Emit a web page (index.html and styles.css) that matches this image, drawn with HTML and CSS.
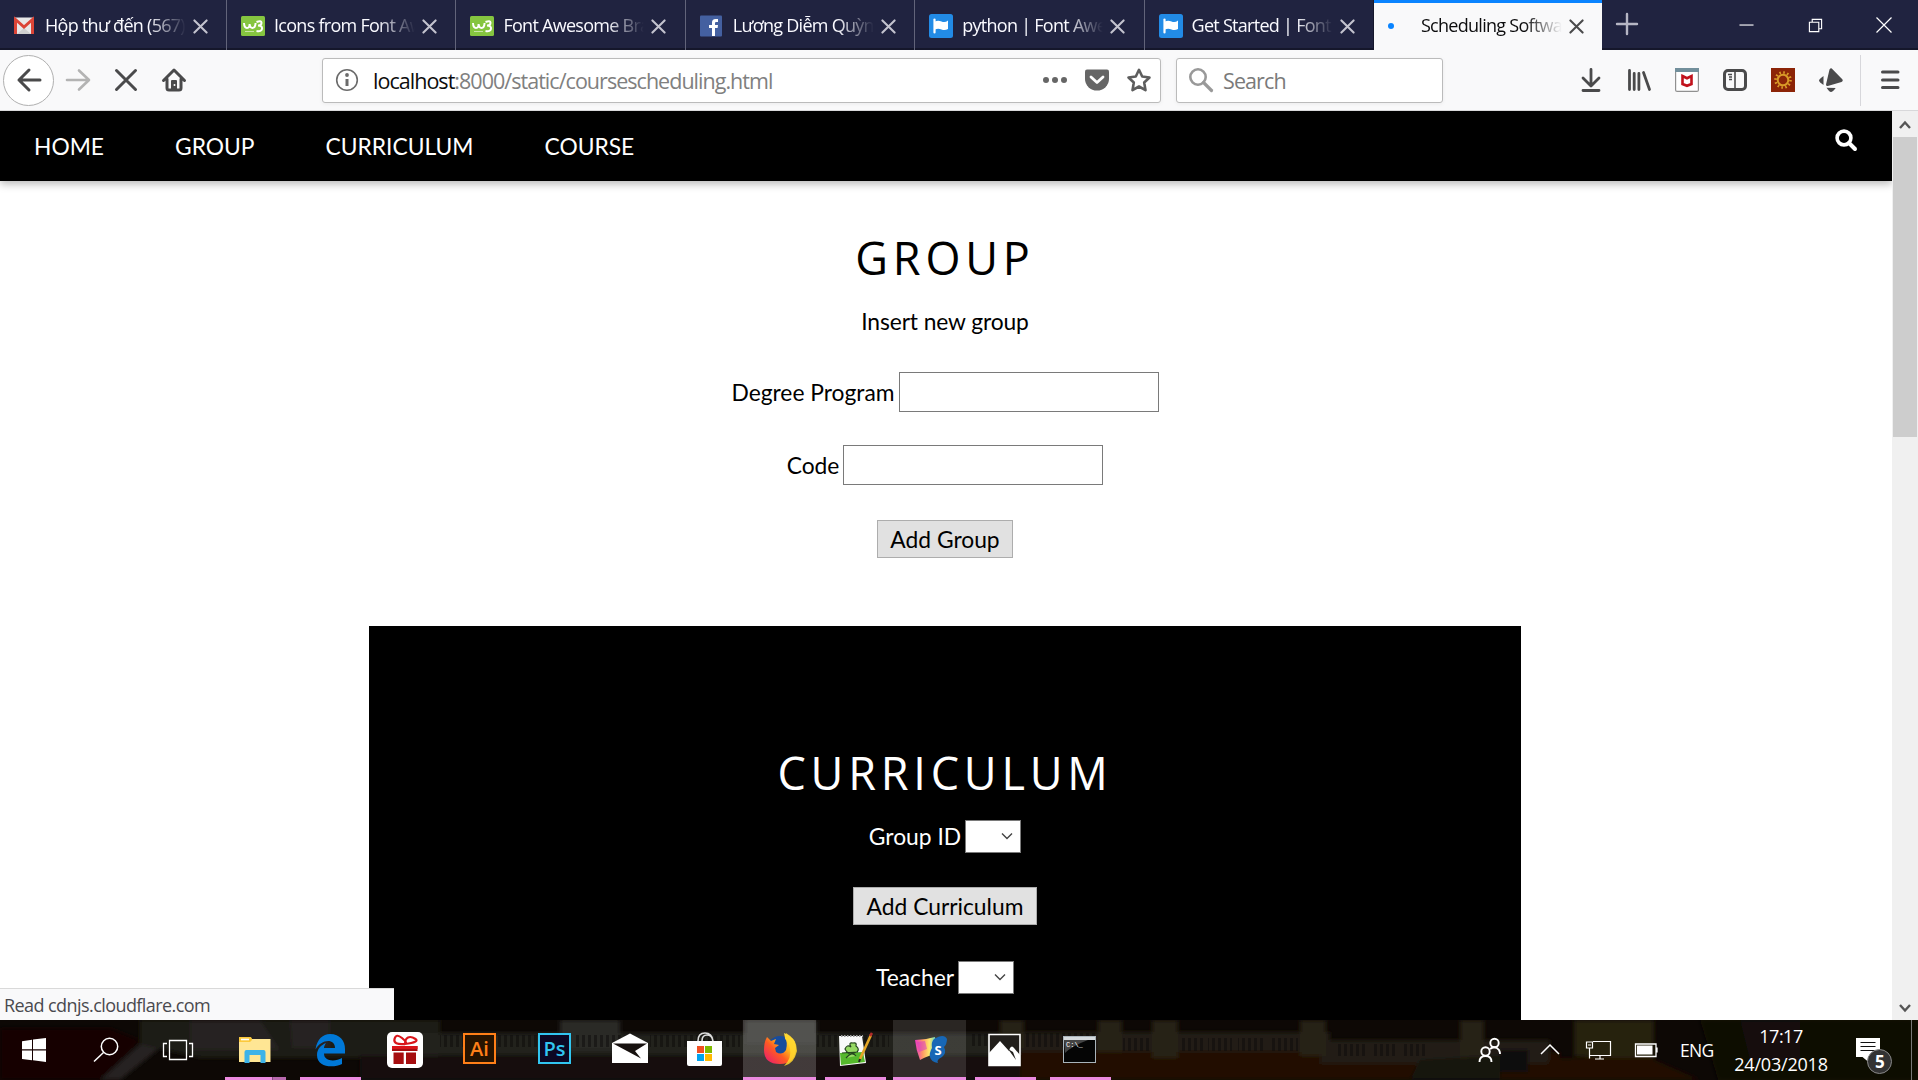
FILE: index.html
```html
<!DOCTYPE html>
<html lang="en">
<head>
<meta charset="utf-8">
<title>Scheduling Software</title>
<link rel="stylesheet" href="styles.css">
</head>
<body>
<svg class="defs" aria-hidden="true">
  <symbol id="close" viewBox="0 0 16 16"><path d="M1.5 1.5l13 13M14.5 1.5l-13 13" fill="none" stroke="currentColor" stroke-width="2.2" stroke-linecap="round"/></symbol>
  <symbol id="w3" viewBox="0 0 24 24"><rect y="2" width="24" height="20" rx="1.5" fill="#85c540"/><path d="M3 9q.3 5 3 5t2.600-4q.4 4 3 4t3-5M15.500 8q5-2 5 .8t-3.500 2.700q4.500.2 4 3.300t-5.500 2.200" fill="none" stroke="#fff" stroke-width="2"/><path d="M4 17.500h9" stroke="#c7e5a5" stroke-width="1"/></symbol>
  <symbol id="flag" viewBox="0 0 24 24"><rect width="24" height="24" rx="2.500" fill="#228be6"/><path d="M5.500 5.500v13" stroke="#fff" stroke-width="2.200" stroke-linecap="round"/><path d="M6 7.500q3-1.500 6.500 0t6.500-1v8.500q-3 1.800-6.500.5T6 15.500z" fill="#fff"/></symbol>
  <symbol id="down" viewBox="0 0 12 8"><path d="M1 1.500l5 5 5-5" fill="none" stroke="#444" stroke-width="1.400"/></symbol>
</svg>

<header class="tabs">
  <div class="tab first"><svg class="fav" viewBox="0 0 24 24"><rect x="2" y="3.500" width="20" height="16.500" rx="1" fill="#e8e8e8"/><path d="M5 20l7-6 7 6z" fill="#cfcfcf"/><path d="M3.500 20V5.500l8.500 7.500 8.500-7.500V20" fill="none" stroke="#dc4537" stroke-width="3"/></svg><span class="label">Hộp thư đến (567)</span><svg class="x"><use href="#close"/></svg></div>
  <div class="tab"><svg class="fav"><use href="#w3"/></svg><span class="label">Icons from Font Awesome</span><svg class="x"><use href="#close"/></svg></div>
  <div class="tab"><svg class="fav"><use href="#w3"/></svg><span class="label">Font Awesome Brand</span><svg class="x"><use href="#close"/></svg></div>
  <div class="tab"><svg class="fav" viewBox="0 0 24 24"><rect y="1.500" width="22" height="21" rx="1" fill="#4460a0"/><path d="M12 22v-8H9v-3h3V8.500Q12 5 15.500 5H18v3h-2q-1 0-1 1.200V11h3l-.4 3H15v8z" fill="#fff"/></svg><span class="label">Lương Diễm Quỳnh</span><svg class="x"><use href="#close"/></svg></div>
  <div class="tab"><svg class="fav"><use href="#flag"/></svg><span class="label">python | Font Awesome</span><svg class="x"><use href="#close"/></svg></div>
  <div class="tab"><svg class="fav"><use href="#flag"/></svg><span class="label">Get Started | Font Awesome</span><svg class="x"><use href="#close"/></svg></div>
  <div class="tab active"><svg class="fav" viewBox="0 0 24 24"><circle cx="3" cy="12" r="3" fill="#0a84ff"/></svg><span class="label">Scheduling Software</span><svg class="x"><use href="#close"/></svg></div>
  <svg class="plus" viewBox="0 0 22 22"><path d="M11 1v20M1 11h20" stroke="#b6b6c4" stroke-width="2.400" stroke-linecap="round"/></svg>
  <div class="controls">
    <svg viewBox="0 0 16 16"><path d="M.5 7.500h15" stroke="#fff" stroke-width="1.200"/></svg>
    <svg viewBox="0 0 16 16"><path d="M1.500 4.500h10v10h-10zM4.500 4.500v-3h10v10h-3" fill="none" stroke="#fff" stroke-width="1.200"/></svg>
    <svg viewBox="0 0 16 16"><path d="M.5.500l15 15M15.500.500l-15 15" stroke="#fff" stroke-width="1.200"/></svg>
  </div>
</header>

<div class="toolbar">
  <button class="back"><svg viewBox="0 0 24 24"><path d="M23 12H2M12 2L2 12l10 10" fill="none" stroke="#4a4a4b" stroke-width="3" stroke-linecap="round" stroke-linejoin="round"/></svg></button>
  <div class="nav-icons">
    <svg viewBox="0 0 24 24"><path d="M1 12h21M13 2.500l10 9.500-10 9.500" fill="none" stroke="#b3b3b3" stroke-width="2.600" stroke-linecap="round" stroke-linejoin="round"/></svg>
    <svg viewBox="0 0 24 24"><path d="M2.500 2.500l19 19M21.500 2.500l-19 19" stroke="#4a4a4b" stroke-width="3" stroke-linecap="round"/></svg>
    <svg viewBox="0 0 24 24"><path d="M1.500 12.500L12 2l10.500 10.500M5 11v9q0 2 2 2h10q2 0 2-2v-9" fill="none" stroke="#4a4a4b" stroke-width="3" stroke-linecap="round" stroke-linejoin="round"/><path d="M9 22v-9q0-1 1-1h4q1 0 1 1v9z" fill="#4a4a4b"/><circle cx="12.500" cy="17" r="1" fill="#fff"/></svg>
  </div>
  <div class="url">
    <svg viewBox="0 0 24 24"><circle cx="12" cy="12" r="10.300" fill="none" stroke="#6b6b6b" stroke-width="1.600"/><path d="M12 11v7" stroke="#6b6b6b" stroke-width="3"/><circle cx="12" cy="7" r="1.900" fill="#6b6b6b"/></svg>
    <span class="address"><b>localhost</b>:8000/static/coursescheduling.html</span>
    <svg viewBox="0 0 24 24" fill="#666"><circle cx="3" cy="12" r="3"/><circle cx="12" cy="12" r="3"/><circle cx="21" cy="12" r="3"/></svg>
    <svg viewBox="0 0 24 24"><path d="M0 3.500Q0 1.500 2 1.500h20q2 0 2 2V11a12 11.500 0 0 1-24 0z" fill="#666"/><path d="M6 9l6 5.500L18 9" fill="none" stroke="#fff" stroke-width="2.800" stroke-linecap="round" stroke-linejoin="round"/></svg>
    <svg viewBox="0 0 24 24"><path d="M12 1.800l3.200 6.700 7.300 1-5.300 5 1.300 7.700L12 18.500l-6.500 3.700 1.300-7.700-5.300-5 7.300-1z" fill="none" stroke="#5e5e5e" stroke-width="2.600" stroke-linejoin="round"/></svg>
  </div>
  <div class="searchbox">
    <svg viewBox="0 0 24 24"><circle cx="9" cy="9" r="7.700" fill="none" stroke="#999" stroke-width="2.600"/><path d="M14.500 14.500l8 8" stroke="#999" stroke-width="3.200" stroke-linecap="round"/></svg>
    <span>Search</span>
  </div>
  <div class="tools">
    <svg viewBox="0 0 24 24"><path d="M12 1.500V17M4 10l8 8 8-8M4 22.500h16" fill="none" stroke="#4a4a4b" stroke-width="2.800" stroke-linecap="round" stroke-linejoin="round"/></svg>
    <svg viewBox="0 0 24 24"><path d="M2.500 2.500v19M7.200 5.500v16M11.900 5.500v16M16.500 4.500l6 17" fill="none" stroke="#4a4a4b" stroke-width="2.800" stroke-linecap="round"/></svg>
    <svg viewBox="0 0 24 24"><rect x=".6" y=".6" width="22.800" height="22.800" rx="1.500" fill="#fff" stroke="#909090" stroke-width="1.200"/><path d="M0 0h24v4H0z" fill="#728f9b"/><path d="M7.500 8l4.500 2.200L16.500 8v8L12 17.800 7.500 16z" fill="none" stroke="#c1121c" stroke-width="2.600"/></svg>
    <svg viewBox="0 0 24 24"><rect x="1.500" y="2.500" width="21" height="19" rx="3.500" fill="none" stroke="#4a4a4b" stroke-width="3"/><path d="M12 3v18" stroke="#4a4a4b" stroke-width="1.600"/><path d="M5 6.500h4M6 9h3M6 11.500h3" stroke="#4a4a4b" stroke-width="1.300"/></svg>
    <svg viewBox="0 0 24 24"><rect width="24" height="24" fill="#8c2407"/><circle cx="12" cy="12" r="5.300" fill="none" stroke="#d99a28" stroke-width="2"/><circle cx="12" cy="12" r="7.500" fill="none" stroke="#d99a28" stroke-width="2.600" stroke-dasharray="1.600 2.327"/></svg>
    <svg viewBox="0 0 24 24" fill="#4a4a4b"><path d="M7 16.500l3.500-15Q12-.8 13.500 1.200l10 10.300q1 1.800-1 2.500l-13.700 4Q7 18.300 7 16.500z"/><path d="M4.500 8v9Q0 14 0 12.500T4.500 8zM7.500 19.800l9.200.2q-3 4-4.700 4t-4.500-4.200z"/></svg>
  </div>
  <div class="menu"><svg viewBox="0 0 24 24"><path d="M4.500 4h15.500M4.500 12h15.500M4.500 19.500h15.500" stroke="#4a4a4b" stroke-width="3" stroke-linecap="round"/></svg></div>
</div>

<div class="viewport">
  <main class="page">
    <nav class="sitenav">
      <a>HOME</a><a>GROUP</a><a>CURRICULUM</a><a>COURSE</a>
      <svg viewBox="0 0 22 22"><circle cx="9" cy="9" r="6.900" fill="none" stroke="#fff" stroke-width="3.600"/><path d="M14 14l6 6" stroke="#fff" stroke-width="4" stroke-linecap="round"/></svg>
    </nav>
    <section class="group">
      <h2>GROUP</h2>
      <p>Insert new group</p>
      <div class="row r1"><label>Degree Program</label><input type="text"></div>
      <div class="row r2"><label>Code</label><input type="text"></div>
      <button class="btn b1">Add Group</button>
    </section>
    <section class="curriculum">
      <h2>CURRICULUM</h2>
      <div class="row"><label>Group ID</label><span class="select"><svg><use href="#down"/></svg></span></div>
      <button class="btn b2">Add Curriculum</button>
      <div class="row"><label>Teacher</label><span class="select"><svg><use href="#down"/></svg></span></div>
    </section>
  </main>
  <div class="scrollbar">
    <svg viewBox="0 0 12 12"><path d="M1 9l5-5.500L11 9" fill="none" stroke="#555" stroke-width="2.400"/></svg>
    <div class="thumb"></div>
    <svg class="end" viewBox="0 0 12 12"><path d="M1 3l5 5.500L11 3" fill="none" stroke="#555" stroke-width="2.400"/></svg>
  </div>
  <div class="status">Read cdnjs.cloudflare.com</div>
</div>

<footer class="taskbar">
  <svg class="wall" viewBox="0 0 1918 60" preserveAspectRatio="none">
    <defs><filter id="soft"><feGaussianBlur stdDeviation="2"/></filter>
    <pattern id="rail" width="6" height="20" patternUnits="userSpaceOnUse"><path d="M0 0h3v20H0z" fill="#0c0a09"/></pattern></defs>
    <rect width="1918" height="60" fill="#0d0805"/>
    <g filter="url(#soft)">
      <path d="M0 8h110l30 12-40 40H0z" fill="#120604"/>
      <path d="M150 15l20 5-50 40h-20z" fill="#252321"/>
      <path d="M140 0h300v38H200l-60-14z" fill="#1c1b19"/>
      <path d="M190 0h70l20 30h-90zM290 0h40v28h-38z" fill="#252421"/>
      <path d="M360 36h700v24H360z" fill="#150a08"/>
      <path d="M415 13h610v22H415z" fill="#24221f"/>
      <path d="M560 0h60v30h-60zM745 0h72v24h-72z" fill="#2c2a27"/>
      <path d="M1020 32h540v28h-540z" fill="#200b04"/>
      <path d="M1020 12h310v20h-310zM1320 20h230v24h-230z" fill="#211e16"/>
      <path d="M1000 0h24v28h-24zM1098 0h24v32h-24zM1152 0h26v38h-26zM1300 0h26v36h-26zM1460 0h24v46h-24z" fill="#262213"/>
      <path d="M1574 0h80v50h-28v-10l-52-4z" fill="#26230f"/>
      <path d="M1420 40l80-4v24h-90z" fill="#17120c"/>
      <path d="M1500 30h28v22h-28z" fill="#07070a"/>
      <path d="M1550 38h100l50 22h-160z" fill="#241006"/>
      <path d="M1700 0h218v60h-200z" fill="#0b0806"/>
      <path d="M1740 0h60v40h-50z" fill="#13100a"/>
    </g>
    <g fill="url(#rail)" opacity=".5"><path d="M440 15h112v12H440zM576 15h54v12h-54zM650 15h90v12h-90zM817 15h72v12h-72zM970 14h28v12h-28zM1025 13h70v14h-70zM1123 18h28v13h-28zM1182 18h22v13h-22zM1208 18h24v13h-24zM1238 18h26v13h-26zM1270 18h28v13h-28zM1337 24h30v12h-30zM1374 24h24v12h-24zM1404 24h22v12h-22z"/></g>
  </svg>

  <div class="slot sys start"><svg viewBox="-20 -20 40 40" fill="#fff"><path d="M-12-8.800L-2-10.300V-.7h-10zM-1-10.500L12-12V-.7H-1zM-12 .5h10v9.700l-10-1.300zM-1 .5h13V12l-13-1.700z"/></svg></div>
  <div class="slot sys"><svg viewBox="-20 -20 40 40" fill="none" stroke="#fff" stroke-width="1.500"><circle cx="3.500" cy="-3.500" r="8.200"/><path d="M-2.500 2.500l-9.500 9"/></svg></div>
  <div class="slot sys last"><svg viewBox="-20 -20 40 40" fill="none" stroke="#fff" stroke-width="1.300"><path d="M-8.500-9.500h17v19h-17zM-11-6.500h-3.500v13h3.500M11-6.500h3.500v13H11"/></svg></div>

  <div class="slot open stack"><svg viewBox="-20 -20 40 40"><path d="M-16-12q0-1 1-1h10q1 0 1.500 2H15.500V12H-16z" fill="#ffe694"/><path d="M-16-12q0-1 1-1h10q2 0 2 3l-2 2h-11z" fill="#fcc93b"/><path d="M-14-10.500h8" stroke="#fff" stroke-width="1.600"/><path d="M-10.500 13V2q0-2 2-2h17q2 0 2 2v11h-5V5h-11v8z" fill="#3db3e8"/></svg></div>
  <div class="slot open"><svg viewBox="-20 -20 40 40"><path d="M-14.500-.5C-13-11-7-16 0-16c10 0 15 7 15 15v4.500H-6c0 8 11 8.500 18 4.500v6c-8 4-25 4-25-9C-13-1-9-5-4-7c-1.500 2-2 4-2 5H5c0-10-14-9-19.500 1.500z" fill="#0078d7"/></svg></div>
  <div class="slot"><svg viewBox="-20 -20 40 40"><rect x="-18" y="-18" width="36" height="36" rx="5" fill="#fff"/><path d="M-13-4h25.500v5H-13zM-11.500 2.500h10.200V14h-10.200zM1 2.500h10V14H1z" fill="#a50e10"/><path d="M-13-4h25.500v3H-13z" fill="#d81418"/><path d="M0-6q-12 1-10.500-5T-3-12t3 6q0-5 3-6.500T10.500-11 0-6z" fill="none" stroke="#d9161a" stroke-width="2.200"/></svg></div>
  <div class="slot"><svg viewBox="-20 -20 40 40"><rect x="-16" y="-16" width="31" height="29" fill="#261300" stroke="#ff7f18" stroke-width="2"/><text x="-.5" y="6" class="ai">Ai</text></svg></div>
  <div class="slot"><svg viewBox="-20 -20 40 40"><rect x="-16" y="-16" width="31" height="29" fill="#0c0824" stroke="#31c5f0" stroke-width="2"/><text x="-.5" y="6" class="ps">Ps</text></svg></div>
  <div class="slot"><svg viewBox="-20 -20 40 40"><path d="M-18-7L0-16.500 18-7v20h-36z" fill="#fff"/><path d="M-17-6.500h34L5 1l6 7.500z" fill="#17110f"/></svg></div>
  <div class="slot"><svg viewBox="-20 -20 40 40"><path d="M-7-9q0-8 7-8t8 8M-3-9q0-6 5-6t6 6" fill="none" stroke="#ddd" stroke-width="1.600"/><path d="M-18-9h35v23q0 2-2 2h-31q-2 0-2-2z" fill="#fff"/><path d="M-8-4h7v7h-7z" fill="#f25022"/><path d="M0-4h7v7H0z" fill="#7fba00"/><path d="M-8 4h7v7h-7z" fill="#00a4ef"/><path d="M0 4h7v7H0z" fill="#ffb900"/></svg></div>
  <div class="slot open lit"><svg viewBox="-20 -20 40 40"><defs><linearGradient id="ff" x1="1" y1="0" x2="0" y2="1"><stop offset=".1" stop-color="#fff04a"/><stop offset=".4" stop-color="#ffb21c"/><stop offset=".6" stop-color="#ff5a23"/><stop offset="1" stop-color="#e5127a"/></linearGradient></defs><circle cy="-1" r="13" fill="#174c9d"/><path d="M-13-13l4 4 5-2-2 5 5 1-4 3 1 4q6 4 10-2 2-8-1-12l-1-5q11 4 12 14 0 17-16 17T-16 0q0-8 3-13z" fill="url(#ff)"/><path d="M6-17q11 6 11 18-3 13-13 15Q12 8 10-1T5-11z" fill="#ffd62e" opacity=".85"/></svg></div>
  <div class="slot open"><svg viewBox="-20 -20 40 40"><path d="M-16-14H7l4 27-26 3z" fill="#fafafa"/><path d="M-15 3L8 2l2 10-24 3z" fill="#55b82c"/><path d="M-14-14H8" stroke="#999" stroke-width="2" stroke-dasharray="1.500 1.500"/><path d="M-10-1q2-5 6-2-3-5 2-4 4-1 3 3 4 3 1 6-7 3-9 1t-3-4zM-13 3l16-1M-9 8q6-7 10-2" fill="#96d963" stroke="#24451d" stroke-width="1.200"/><path d="M16-15L5 9" stroke="#e4a526" stroke-width="2.600"/><path d="M17-17l-2 3" stroke="#b22b2b" stroke-width="2.600"/><path d="M5 9l-1 3" stroke="#222" stroke-width="2"/></svg></div>
  <div class="slot open dim"><svg viewBox="-20 -20 40 40"><defs><linearGradient id="snag"><stop stop-color="#e935c5"/><stop offset=".35" stop-color="#ff9966"/><stop offset=".65" stop-color="#ffe86a"/><stop offset="1" stop-color="#39c6d9"/></linearGradient></defs><path d="M-15-10q10 0 20-3l2 17q-8 1-17 6-4-10-5-20z" fill="url(#snag)"/><path d="M-13-8l8-1 2 8-8 3z" fill="#d431d2" opacity=".5"/><path d="M4-11q10-6 13 0 0 5-3 8 3 6-2 10-6 3-4 6-7-1-8-6Q-1 3 2-2 1-8 4-11z" fill="#1767b5"/><text x="8" y="5" class="snagit">S</text></svg></div>
  <div class="slot open"><svg viewBox="-20 -20 40 40"><path d="M-16-15.500h31v31h-31z" fill="#211e1b" stroke="#fff" stroke-width="1.600"/><path d="M-16 3L-5-9 4 1l1-3q2-3 4 0l6 7v11h-31z" fill="#fff"/><path d="M3-1l8 11-3-8z" fill="#211e1b"/></svg></div>
  <div class="slot open"><svg viewBox="-20 -20 40 40"><rect x="-16.500" y="-13.500" width="32" height="26" fill="#050505" stroke="#a9b4bb"/><path d="M-16-13h31v3h-31z" fill="#d5dade"/><path d="M-16-10H8Q-8-4-15 3z" fill="#444"/><text x="-14" y="-3" class="cmd">C:\_</text></svg></div>

  <div class="tray">
    <div class="t60"><svg viewBox="-20 -20 40 40" fill="none" stroke="#fff" stroke-width="1.900"><circle cx="4.500" cy="-7" r="4.200"/><path d="M0-1q5-4 9 1 1 2 1 4"/><circle cx="-4.500" cy="1.500" r="4.200"/><path d="M-10.500 12q0-6 6-6t6 6"/></svg></div>
    <div class="t60"><svg viewBox="-20 -20 40 40" fill="none" stroke="#fff" stroke-width="1.500"><path d="M-9 4l9-9 9 9"/></svg></div>
    <div class="t36"><svg viewBox="-20 -20 40 40" fill="none" stroke="#fff" stroke-width="1.200"><path d="M-5-8.500h17.500v14H-8.500V-2M-11.500-8h6v6h-6zM-8.500-2v10.500M2 6v2.500M-3 9h9M-10-5h3"/></svg></div>
    <div class="t60"><svg viewBox="-20 -20 40 40"><path d="M-10.500-6h20.500v12.500h-20.500zM11-2.500v5" fill="none" stroke="#fff" stroke-width="1.300"/><path d="M-9-4.500H6.500v9H-9z" fill="#fff"/></svg></div>
    <div class="lang">ENG</div>
    <div class="clock"><span>17:17</span><span class="date">24/03/2018</span></div>
    <div class="note"><svg viewBox="-33.500 -30 67 60"><path d="M-21.500-12H2.500V7H-9v5l-6-5h-6.500z" fill="#fff"/><path d="M-17-7.500H-2M-17-3.500H-2M-17 .5H-2" stroke="#111" stroke-width="1.200"/><circle cx="2" cy="11.500" r="12" fill="#333" stroke="#888" stroke-width="1"/><text x="2" y="17.500" class="badge">5</text></svg></div>
    <div class="peek"></div>
  </div>
</footer>
</body>
</html>
```

FILE: styles.css
```css
* { box-sizing: border-box; }
body { margin: 0; width: 1918px; height: 1080px; overflow: hidden; display: flex; flex-direction: column; font-family: "Open Sans", "Noto Sans", sans-serif; background: #fff; }
svg { display: block; flex: none; overflow: visible; }
.defs { position: absolute; width: 0; height: 0; }

/* tab strip */
.tabs { height: 50px; flex: none; display: flex; background: #202340; box-shadow: inset 0 -2px #15172b; color: #fafaff; }
.tab { width: 229.400px; flex: none; display: flex; align-items: center; padding: 2px 0 0 14px; border-right: 1px solid #62647a; font-size: 18px; }
.tab.first { width: 227px; padding-left: 12px; }
.tab:nth-child(6) { border-right-color: #15172b; }
.fav { width: 24px; height: 24px; margin-right: 9px; }
.label { width: 144px; height: 30px; line-height: 28px; overflow: hidden; white-space: nowrap; letter-spacing: -.72px; -webkit-mask-image: linear-gradient(90deg, #000 104px, transparent 141px); mask-image: linear-gradient(90deg, #000 104px, transparent 141px); }
.x { width: 15px; height: 15px; margin-left: 4px; color: #c3c3ce; }
.tab.active { width: 228px; background: #f9f9fa; border: 0; border-top: 3px solid #0a84ff; padding: 0 0 1px 14px; color: #0c0c0d; }
.active .x { color: #4a4a4b; }
.plus { width: 22px; height: 22px; margin: 13px 0 0 14px; }
.controls { margin-left: auto; padding-right: 26px; display: flex; gap: 53.500px; align-items: center; height: 50px; }
.controls svg { width: 15px; height: 15px; }
.controls svg:last-child { width: 16px; height: 16px; }

/* navigation toolbar */
.toolbar { height: 61px; flex: none; display: flex; align-items: center; background: #f9f9fa; border-bottom: 1px solid #d8d8da; }
.toolbar svg { width: 24px; height: 24px; }
.back { width: 51px; height: 51px; margin-left: 3px; padding: 0; border: 1px solid #b0b0b0; border-radius: 50%; background: #fff; display: flex; align-items: center; justify-content: center; }
.nav-icons { display: flex; gap: 24px; margin-left: 12px; }
.url { width: 839px; height: 45px; margin-left: 136px; padding: 0 9px 0 12px; display: flex; align-items: center; gap: 18px; background: #fff; border: 1px solid #bbb; border-radius: 3px; box-shadow: 0 1px 4px rgba(0,0,0,.06); font-size: 21.500px; color: #808080; }
.address { flex: 1; margin-left: -4px; white-space: nowrap; letter-spacing: -.97px; }
.address b { font-weight: 400; color: #0c0c0d; }
.searchbox { width: 267px; height: 45px; margin-left: 15px; padding: 0 12px; display: flex; align-items: center; gap: 10px; background: #fff; border: 1px solid #bbb; border-radius: 3px; box-shadow: 0 1px 4px rgba(0,0,0,.06); font-size: 21.500px; letter-spacing: -.9px; color: #7a7a7a; }
.tools { display: flex; gap: 24px; margin-left: auto; padding-right: 17px; }
.menu { width: 58px; height: 51px; padding-left: 17px; border-left: 1px solid #d7d7db; display: flex; align-items: center; }

/* page */
.viewport { height: 909px; flex: none; display: flex; position: relative; }
.page { width: 1892px; overflow: hidden; font: 22.800px/34px Lato, sans-serif; color: #000; }
.sitenav { height: 70px; padding: 0 0 0 34px; display: flex; align-items: center; gap: 71px; background: #000; color: #fff; box-shadow: 0 3px 8px rgba(0,0,0,.28); }
.sitenav svg { width: 22px; height: 22px; margin: -12px 35px 0 auto; }
h2 { margin: 0; font: 45px/60px "Open Sans", sans-serif; letter-spacing: 4.800px; }
.group { height: 445px; padding: 47px 2px 0 0; display: flex; flex-direction: column; align-items: center; }
.group p { margin: 16px 0 0; letter-spacing: -.1px; }
.row { display: flex; justify-content: center; align-items: center; gap: 4px; }
.row input { width: 260px; height: 40px; padding: 0; border: 1px solid #7a7a7a; background: #fff; }
.group label { margin-top: -1px; }
.r1 { margin-top: 34px; }
.r2 { margin-top: 33px; }
.btn { height: 38px; padding: 1px 0 0; border: 1px solid #adadad; background: #e1e1e1; font: inherit; line-height: 33px; color: #000; }
.b1 { width: 136px; margin-top: 35px; }
.b2 { width: 184px; margin: 34px 0 35px; }
.curriculum { width: 1152px; height: 500px; margin-left: 369px; padding-top: 117px; display: flex; flex-direction: column; align-items: center; background: #000; color: #fff; }
.curriculum h2 { margin-bottom: 16px; }
.select { width: 56px; height: 33px; padding-right: 7px; border: 1px solid #7a7a7a; background: #fff; display: flex; align-items: center; justify-content: flex-end; }
.select svg { width: 12px; height: 8px; }
.scrollbar { width: 26px; background: #f0f0f0; display: flex; flex-direction: column; align-items: center; padding: 8px 0 6px; }
.scrollbar svg { width: 12px; height: 12px; }
.thumb { width: 24px; height: 300px; margin-top: 6px; background: #cdcdcd; }
.scrollbar .end { margin-top: auto; }
.status { position: absolute; left: 0; bottom: 0; width: 394px; height: 32px; padding-left: 4px; border-top: 1px solid #d9d9d9; background: #f9f9fa; font-size: 18px; line-height: 33px; letter-spacing: -.570px; color: #4a4a4f; }

/* Windows taskbar */
.taskbar { height: 60px; flex: none; display: flex; position: relative; overflow: hidden; color: #fff; }
.wall { position: absolute; left: 0; top: 0; width: 1918px; height: 60px; z-index: -1; }
.slot { width: 75px; flex: none; display: flex; align-items: center; justify-content: center; }
.slot svg, .t60 svg, .t36 svg { width: 40px; height: 40px; }
.sys { width: 72px; }
.start { margin-left: -2px; }
.last { margin-right: 3px; }
.open { background: linear-gradient(#eb8adf, #eb8adf) 8px 57px / 61px 3px no-repeat; }
.stack { background: linear-gradient(90deg, #eb8adf 47px, #86507f 47px 48px, #b869ae 48px) 8px 57px / 61px 3px no-repeat; }
.lit { background: linear-gradient(#eb8adf, #eb8adf) 1px 57px / 73px 3px no-repeat, linear-gradient(rgba(255,255,255,.19), rgba(255,255,255,.19)) 1px 0 / 73px 57px no-repeat; }
.dim { background: linear-gradient(#eb8adf, #eb8adf) 1px 57px / 73px 3px no-repeat, linear-gradient(rgba(255,255,255,.12), rgba(255,255,255,.12)) 1px 0 / 73px 57px no-repeat; }
.ai, .ps { font: 600 20px "Open Sans", sans-serif; text-anchor: middle; fill: #ff7f18; }
.ps { fill: #31c5f0; }
.snagit { font: bold 13px "Open Sans", sans-serif; text-anchor: middle; fill: #fff; }
.cmd { font: 7px "Liberation Mono", monospace; fill: #fff; }
.tray { margin-left: auto; display: flex; align-items: center; font-size: 18px; letter-spacing: -.5px; }
.t60 { width: 60px; display: flex; justify-content: center; }
.t36 { width: 36px; display: flex; justify-content: center; }
.lang { width: 42px; padding-left: 4px; font-size: 17.500px; letter-spacing: -.7px; }
.clock { width: 126px; display: flex; flex-direction: column; align-items: center; line-height: 28px; }
.date { letter-spacing: -.2px; }
.note svg { width: 67px; height: 60px; }
.badge { font: bold 17px "Open Sans", sans-serif; text-anchor: middle; fill: #fff; }
.peek { width: 7px; height: 60px; border-left: 1px solid #777; }
```
